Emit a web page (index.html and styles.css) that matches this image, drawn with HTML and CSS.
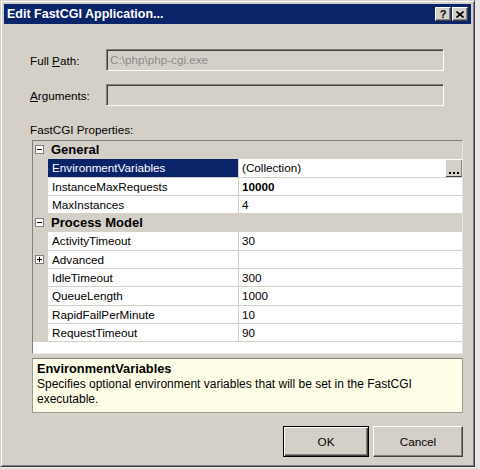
FILE: index.html
```html
<!DOCTYPE html>
<html>
<head>
<meta charset="utf-8">
<title>Edit FastCGI Application...</title>
<link rel="stylesheet" href="styles.css">
</head>
<body>
<div class="window">
  <div class="titlebar">
    <span class="title">Edit FastCGI Application...</span>
    <div class="tbuttons">
      <span class="tbtn help-btn">?</span>
      <span class="tbtn close-btn"><svg width="8" height="7" viewBox="0 0 8 7"><path d="M0.5 0.5 L7.5 6.5 M7.5 0.5 L0.5 6.5" stroke="#000" stroke-width="1.6" fill="none"/></svg></span>
    </div>
  </div>
  <div class="content">
    <div class="field">
      <label class="flabel">Full <u>P</u>ath:</label>
      <div class="textbox">C:\php\php-cgi.exe</div>
    </div>
    <div class="field field-last">
      <label class="flabel"><u>A</u>rguments:</label>
      <div class="textbox"></div>
    </div>
    <div class="section-label">FastCGI Properties:</div>
    <div class="grid">
      <div class="row cat"><span class="margin"><span class="exp"></span></span><span class="cat-name">General</span></div>
      <div class="row prop selected"><span class="margin"></span><span class="name">EnvironmentVariables</span><span class="value">(Collection)<span class="ellipsis"><span class="dot"></span><span class="dot"></span><span class="dot"></span></span></span></div>
      <div class="row prop"><span class="margin"></span><span class="name">InstanceMaxRequests</span><span class="value bold">10000</span></div>
      <div class="row prop"><span class="margin"></span><span class="name">MaxInstances</span><span class="value">4</span></div>
      <div class="row cat"><span class="margin"><span class="exp"></span></span><span class="cat-name">Process Model</span></div>
      <div class="row prop"><span class="margin"></span><span class="name">ActivityTimeout</span><span class="value">30</span></div>
      <div class="row prop"><span class="margin"><span class="exp plus"></span></span><span class="name">Advanced</span><span class="value"></span></div>
      <div class="row prop"><span class="margin"></span><span class="name">IdleTimeout</span><span class="value">300</span></div>
      <div class="row prop"><span class="margin"></span><span class="name">QueueLength</span><span class="value">1000</span></div>
      <div class="row prop"><span class="margin"></span><span class="name">RapidFailPerMinute</span><span class="value">10</span></div>
      <div class="row prop"><span class="margin"></span><span class="name">RequestTimeout</span><span class="value">90</span></div>
    </div>
    <div class="helpbox">
      <div class="help-title">EnvironmentVariables</div>
      <div class="help-desc">Specifies optional environment variables that will be set in the FastCGI executable.</div>
    </div>
    <div class="buttons">
      <div class="btn default">OK</div>
      <div class="btn cancel">Cancel</div>
    </div>
  </div>
</div>
</body>
</html>
```
FILE: styles.css
```css
* { box-sizing: border-box; }
html, body { margin: 0; padding: 0; }
body {
  background: #e6e6e6;
  font-family: "Liberation Sans", Arial, sans-serif;
  font-size: 11.7px;
  color: #000;
  width: 480px;
  height: 469px;
  overflow: hidden;
}
.window {
  width: 475px;
  height: 467px;
  background: #d4d0c8;
  border: 1px solid;
  border-color: #d4d0c8 #404040 #404040 #d4d0c8;
  box-shadow: inset 1px 1px #ffffff, inset -1px -1px #808080;
  padding: 3px;
  display: flex;
  flex-direction: column;
}
.titlebar {
  height: 20px;
  flex: none;
  background: #0a246a;
  display: flex;
  align-items: center;
  justify-content: space-between;
  padding: 0 3px 0 3px;
  color: #fff;
}
.title { font-weight: bold; font-size: 12.5px; }
.tbuttons { display: flex; gap: 1px; }
.tbtn {
  width: 16px;
  height: 14px;
  background: #d4d0c8;
  border: 1px solid;
  border-color: #ffffff #404040 #404040 #ffffff;
  box-shadow: inset -1px -1px #808080;
  display: flex;
  align-items: center;
  justify-content: center;
  color: #000;
  font-weight: bold;
  font-size: 11px;
  line-height: 1;
}
.content {
  flex: 1;
  display: flex;
  flex-direction: column;
  padding: 25px 8px 0 26px;
}
.field {
  display: flex;
  align-items: center;
  height: 22px;
  margin-bottom: 13px;
}
.field-last { margin-bottom: 17px; }
.flabel { width: 76px; }
.textbox {
  width: 338px;
  height: 22px;
  background: #d4d0c8;
  border: 1px solid;
  border-color: #808080 #ffffff #ffffff #808080;
  box-shadow: inset 1px 1px #404040, inset -1px -1px #d4d0c8;
  color: #8a8a8a;
  padding: 3px 0 0 3px;
  line-height: 14px;
}
.section-label { line-height: 14px; margin-bottom: 3px; }
.grid {
  margin-left: 2px;
  height: 214px;
  background: #ffffff;
  border: 1px solid;
  border-color: #808080 #e8e8e8 #e8e8e8 #808080;
  display: flex;
  flex-direction: column;
}
.row {
  height: 18.3px;
  display: flex;
  flex: none;
}
.margin {
  width: 15px;
  background: #d4d0c8;
  position: relative;
  flex: none;
}
.cat { background: #d4d0c8; }
.cat-name {
  font-weight: bold;
  font-size: 13px;
  padding-left: 3px;
  line-height: 18px;
}
.exp {
  position: absolute;
  left: 2px;
  top: 4px;
  width: 9px;
  height: 9px;
  border: 1px solid #808080;
  background: #fff;
}
.exp::before {
  content: "";
  position: absolute;
  left: 1px;
  top: 3px;
  width: 5px;
  height: 1px;
  background: #000;
}
.exp.plus::after {
  content: "";
  position: absolute;
  left: 3px;
  top: 1px;
  width: 1px;
  height: 5px;
  background: #000;
}
.name {
  width: 191px;
  flex: none;
  border-right: 1px solid #d4d0c8;
  border-bottom: 1px solid #d4d0c8;
  padding-left: 4px;
  line-height: 17px;
  white-space: nowrap;
}
.value {
  flex: 1;
  border-bottom: 1px solid #d4d0c8;
  padding-left: 3px;
  line-height: 17px;
  display: flex;
  justify-content: space-between;
}
.bold { font-weight: bold; }
.selected .name { background: #0a246a; color: #fff; }
.ellipsis {
  width: 16px;
  height: 17px;
  background: #d4d0c8;
  border-right: 1px solid #808080;
  border-bottom: 1px solid #404040;
  margin-top: 1px;
  display: flex;
  align-items: flex-end;
  justify-content: center;
  gap: 2px;
  padding-bottom: 2px;
}
.dot {
  width: 2px;
  height: 2px;
  background: #000;
}
.helpbox {
  margin-top: 4px;
  margin-left: 2px;
  height: 55px;
  background: #ffffe7;
  border: 1px solid #9a9a9a;
  border-top-color: #808080;
  padding: 3px 0 0 4px;
}
.help-title { font-weight: bold; font-size: 12.8px; line-height: 14px; }
.help-desc { margin-top: 1px; line-height: 15px; padding-right: 40px; font-size: 12px; }
.buttons {
  margin-top: 13px;
  display: flex;
  justify-content: flex-end;
  gap: 4px;
}
.btn {
  height: 31px;
  display: flex;
  align-items: center;
  justify-content: center;
  background: #d4d0c8;
  border: 1px solid;
}
.btn.default {
  width: 86px;
  border-color: #000;
  box-shadow: inset 1px 1px #ffffff, inset -1px -1px #404040, inset -2px -2px #808080;
}
.btn.cancel {
  width: 90px;
  border-color: #ffffff #404040 #404040 #ffffff;
  box-shadow: inset -1px -1px #808080;
}
```
